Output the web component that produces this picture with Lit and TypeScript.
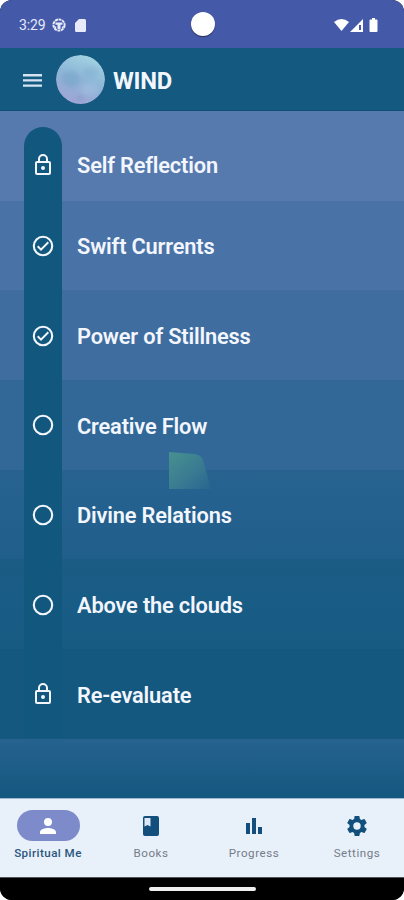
import { LitElement, html, css, svg } from "lit";
import { customElement } from "lit/decorators.js";
import { classMap } from "lit/directives/class-map.js";

const lock = svg`<path d="M18 8h-1V6A5 5 0 0 0 7 6v2H6a2 2 0 0 0-2 2v10a2 2 0 0 0 2 2h12a2 2 0 0 0 2-2V10a2 2 0 0 0-2-2zM9 6a3 3 0 0 1 6 0v2H9V6zm9 14H6V10h12v10zm-6-3a2 2 0 1 0 0-4 2 2 0 0 0 0 4z"/>`;
const ring = svg`<circle cx="12" cy="12" r="9.200" fill="none" stroke="currentColor" stroke-width="2.100"/>`;
const check = svg`${ring}<path d="M16.600 7.600 10 14.200l-2.600-2.600L6 13l4 4 8-8z"/>`;

const steps = [
  { title: "Self Reflection", icon: lock, row: "r1" },
  { title: "Swift Currents", icon: check, row: "r2" },
  { title: "Power of Stillness", icon: check, row: "r3" },
  { title: "Creative Flow", icon: ring, row: "r4" },
  { title: "Divine Relations", icon: ring, row: "r5" },
  { title: "Above the clouds", icon: ring, row: "r6" },
  { title: "Re-evaluate", icon: lock, row: "r7" },
];

const tabs = [
  { label: "Spiritual Me", active: true, icon: svg`<path d="M12 12a4 4 0 1 0 0-8 4 4 0 0 0 0 8zm0 2c-2.700 0-8 1.300-8 4v2h16v-2c0-2.700-5.300-4-8-4z"/>` },
  { label: "Books", active: false, icon: svg`<path d="M18 2H6a2 2 0 0 0-2 2v16a2 2 0 0 0 2 2h12a2 2 0 0 0 2-2V4a2 2 0 0 0-2-2z"/><path fill="#dce8f6" d="M5.500 4h6v8.500l-3-1.500-3 1.500z"/>` },
  { label: "Progress", active: false, icon: svg`<path d="M4 9h4v11H4zm6-5h4v16h-4zm6 9h4v7h-4z"/>` },
  { label: "Settings", active: false, icon: svg`<path d="M19.430 12.980c.04-.32.07-.64.07-.98s-.03-.66-.07-.98l2.110-1.650c.19-.15.24-.42.12-.64l-2-3.460c-.12-.22-.39-.3-.61-.22l-2.490 1c-.52-.4-1.080-.73-1.690-.98l-.38-2.650A.49.49 0 0 0 14 2h-4c-.25 0-.46.18-.49.42l-.38 2.650c-.61.25-1.170.59-1.690.98l-2.490-1c-.23-.09-.49 0-.61.22l-2 3.460c-.13.22-.07.49.12.64l2.110 1.650c-.04.32-.07.65-.07.98s.03.66.07.98l-2.110 1.650c-.19.15-.24.42-.12.64l2 3.460c.12.22.39.3.61.22l2.490-1c.52.4 1.080.73 1.690.98l.38 2.650c.03.24.24.42.49.42h4c.25 0 .46-.18.49-.42l.38-2.650c.61-.25 1.170-.59 1.690-.98l2.490 1c.23.09.49 0 .61-.22l2-3.460c.12-.22.07-.49-.12-.64zM12 15.700a3.700 3.700 0 1 1 0-7.400 3.700 3.700 0 0 1 0 7.400z"/>` },
];

@customElement("app-root")
export class AppRoot extends LitElement {
  static styles = css`
    :host { display: block; width: 404px; height: 900px; background: #fff; font-family: Roboto, sans-serif; }
    .phone { height: 900px; display: flex; flex-direction: column; border-radius: 12px; overflow: hidden; background: #000; }
    svg { display: block; fill: currentColor; flex: none; }
    .status { height: 48px; box-sizing: border-box; background: #4459a8; color: #e6eafa; display: grid; grid-template-columns: 172px 24px 1fr; align-items: center; padding: 0 26px 0 19px; }
    .left, .right { display: flex; align-items: center; padding-top: 2px; }
    .time { font-size: 14px; line-height: 16px; width: 27px; letter-spacing: -0.1px; margin-right: 6px; white-space: nowrap; }
    .sd { margin-left: 9px; }
    .camera { width: 24px; height: 24px; border-radius: 50%; background: #fff; box-shadow: 0 1px 1px #252e5a; }
    .right { justify-content: flex-end; color: #fff; }
    .wifi { margin-right: 1px; }
    .battery { margin-left: 6px; }
    .bar { height: 63px; box-sizing: border-box; background: #14597f; border-bottom: 1px solid #0d5076; display: flex; align-items: center; padding-left: 23px; color: #f2f6fd; }
    .menu { color: #d4e4f2; margin: 2px 14px 0 0; }
    .moon { border-radius: 50%; margin-right: 8px; }
    .title { font-size: 23.800px; font-weight: 700; line-height: 28px; padding-top: 4px; letter-spacing: -0.3px; }
    .body { flex: none; height: 687px; display: grid; background: linear-gradient(#5579af 627px, #26638f 628px, #14577f 686px); }
    .rows { grid-area: 1 / 1; }
    .row { height: 89.670px; box-sizing: border-box; display: grid; grid-template-columns: 38px 1fr; column-gap: 15px; align-items: center; padding: 1px 0 0 24px; color: #f3f6fd; }
    .row svg { justify-self: center; z-index: 2; }
    .name { font-size: 21.800px; line-height: 28px; font-weight: 600; white-space: nowrap; letter-spacing: -0.17px; padding-top: 3px; z-index: 2; }
    .r1 { padding-top: 18px; background: #577aae; }
    .r2 { background: #4972a7; }
    .r3 { background: #3f6d9f; }
    .r4 { background: #316897; }
    .r5 { background: linear-gradient(#286390, #205e8b); }
    .r6 { background: linear-gradient(#1b5b84, #195c86 40%, #175a82); }
    .r7 { background: #15587f; }
    .rail { grid-area: 1 / 1; width: 38px; height: 611px; margin: 16px 0 0 24px; border-radius: 19px 19px 0 0; background: #12577e; z-index: 1; }
    .leaf { grid-area: 1 / 1; margin: 341px 0 0 169px; z-index: 1; }
    .nav { height: 79px; background: #e8f0fa; border-top: 1px solid #9eb9cf; box-sizing: border-box; display: flex; padding: 11px 0 0; }
    .tab { flex: none; width: 103px; display: flex; flex-direction: column; align-items: center; color: #124f7d; }
    .tab:first-child { width: 96px; }
    .tab:nth-child(2) { width: 110px; }
    .tab:nth-child(3) { width: 96px; }
    .tab:nth-child(4) { width: 110px; }
    .pill { width: 63px; height: 31px; display: grid; place-items: center; border-radius: 16px; }
    .label { font-size: 11.600px; line-height: 14px; margin-top: 5px; color: #757c88; letter-spacing: 0.55px; font-weight: 400; white-space: nowrap; }
    .active .pill { background: #7d8bcb; color: #fff; }
    .active .label { color: #2a557d; font-weight: 500; letter-spacing: 0.45px; }
    .home { height: 23px; background: #000; display: flex; align-items: center; justify-content: center; border-top: 1px solid #555; box-sizing: border-box; }
    .handle { width: 107px; height: 4px; border-radius: 2px; background: #eee; }
  `;

  render() {
    return html`
      <div class="phone">
        <div class="status">
          <div class="left">
            <span class="time">3:29</span>
            <svg width="14" height="14" viewBox="0 0 14 14"><circle cx="7" cy="7" r="5.600" fill="none" stroke="currentColor" stroke-width="2" stroke-dasharray="3 .6"/><path d="M3.500 4.500h7v2.200h-2V11h-3V6.700h-2zM1.500 8l3 .8-1 2.200zM12.500 8l-3 .8 1 2.200z"/></svg>
            <svg class="sd" width="11" height="13" viewBox="0 0 11 13"><path d="M4 0h5.500A1.500 1.500 0 0 1 11 1.500v10A1.500 1.500 0 0 1 9.500 13h-8A1.500 1.500 0 0 1 0 11.500V4z"/></svg>
          </div>
          <div class="camera"></div>
          <div class="right">
            <svg class="wifi" width="15" height="12" viewBox="0 0 15 12"><path d="M0 3Q7.500-3 15 3L7.500 12z"/></svg>
            <svg width="13" height="13" viewBox="0 0 13 13"><path fill-rule="evenodd" d="M13 0v13H0zM9 6v5h2V6z"/></svg>
            <svg class="battery" width="9" height="14" viewBox="0 0 8 14"><path d="M2.500 0h3v1.500H7a1 1 0 0 1 1 1V13a1 1 0 0 1-1 1H1a1 1 0 0 1-1-1V2.500a1 1 0 0 1 1-1h1.500z"/></svg>
          </div>
        </div>
        <div class="bar">
          <svg class="menu" width="19" height="13" viewBox="0 0 19 13"><path d="M0 0h19v2.400H0zm0 5.200h19v2.400H0zm0 5.200h19v2.400H0z"/></svg>
          <svg class="moon" width="49" height="49" viewBox="0 0 49 49">
            <defs>
              <linearGradient id="sky" x1="0.7" y1="0" x2="0.3" y2="1"><stop offset="0" stop-color="#a3d3e3"/><stop offset="0.5" stop-color="#8db4d6"/><stop offset="1" stop-color="#a0a5d6"/></linearGradient>
              <filter id="soft"><feGaussianBlur stdDeviation="2"/></filter>
            </defs>
            <circle cx="24.500" cy="24.500" r="24.500" fill="url(#sky)"/>
            <g filter="url(#soft)">
              <ellipse cx="15" cy="24" rx="9" ry="8" fill="#6b9dc3" opacity="0.4"/>
              <ellipse cx="35" cy="17" rx="8" ry="6" fill="#74a7c8" opacity="0.3"/>
              <ellipse cx="34" cy="34" rx="9" ry="6" fill="#a9c9e5" opacity="0.4"/>
              <ellipse cx="24" cy="43" rx="4" ry="2" fill="#828cc1" opacity="0.5"/>
            </g>
          </svg>
          <div class="title">WIND</div>
        </div>
        <div class="body">
          <div class="rows">
            ${steps.map((s) => html`
              <div class="row ${s.row}">
                <svg width="24" height="24" viewBox="0 0 24 24">${s.icon}</svg>
                <div class="name">${s.title}</div>
              </div>`)}
          </div>
          <div class="rail"></div>
          <svg class="leaf" width="43" height="38" viewBox="0 0 43 38">
            <defs><linearGradient id="leaf" x1="0" y1="0" x2="1" y2="1"><stop offset="0" stop-color="#47918f"/><stop offset="0.55" stop-color="#3a7b92"/><stop offset="1" stop-color="#286590"/></linearGradient></defs>
            <path fill="url(#leaf)" d="M0 0 26 2Q32 3 34 8L42 37H0z"/>
          </svg>
        </div>
        <div class="nav">
          ${tabs.map((t) => html`
            <div class=${classMap({ tab: true, active: t.active })}>
              <div class="pill"><svg width="24" height="24" viewBox="0 0 24 24">${t.icon}</svg></div>
              <div class="label">${t.label}</div>
            </div>`)}
        </div>
        <div class="home"><div class="handle"></div></div>
      </div>`;
  }
}
